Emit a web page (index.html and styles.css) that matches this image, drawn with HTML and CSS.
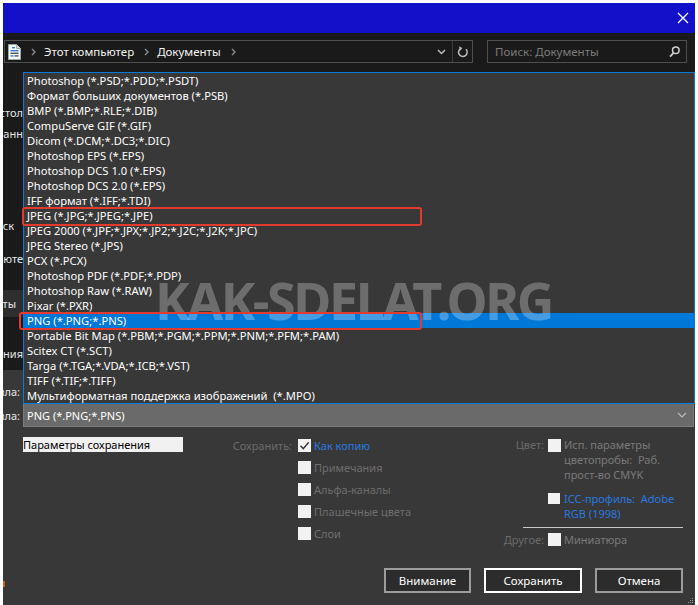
FILE: index.html
```html
<!DOCTYPE html>
<html lang="ru">
<head>
<meta charset="utf-8">
<link rel="stylesheet" href="styles.css">
</head>
<body>
<div class="window">
  <div class="titlebar">
    <svg class="close" width="12" height="12" viewBox="0 0 12 12"><path d="M1 1L11 11M11 1L1 11" stroke="#fff" stroke-width="1.3"/></svg>
  </div>
  <div class="toolbar">
    <div class="address">
      <svg class="docicon" width="13" height="16" viewBox="0 0 13 16"><path d="M0.5 0.5h8l4 4v11h-12z" fill="#f6f6f6" stroke="#9aa"/><path d="M8.5 0.5v4h4" fill="#dde" stroke="#9aa"/><rect x="4" y="3" width="3" height="1.4" fill="#2f7fe0"/><rect x="2.5" y="6" width="8" height="1.4" fill="#2f7fe0"/><rect x="2.5" y="8.6" width="8" height="1.4" fill="#555"/><rect x="2.5" y="11.2" width="3" height="1.4" fill="#2f7fe0"/><rect x="6.5" y="11.2" width="4" height="1.4" fill="#555"/></svg>
      <svg class="chev" width="5" height="8" viewBox="0 0 5 8"><path d="M1 1l3 3-3 3" stroke="#8a8a8a" stroke-width="1.4" fill="none"/></svg>
      <span class="crumb">Этот компьютер</span>
      <svg class="chev" width="5" height="8" viewBox="0 0 5 8"><path d="M1 1l3 3-3 3" stroke="#8a8a8a" stroke-width="1.4" fill="none"/></svg>
      <span class="crumb">Документы</span>
      <svg class="chev" width="5" height="8" viewBox="0 0 5 8"><path d="M1 1l3 3-3 3" stroke="#8a8a8a" stroke-width="1.4" fill="none"/></svg>
      <span class="spacer"></span>
      <svg class="drop" width="9" height="6" viewBox="0 0 9 6"><path d="M1 1l3.5 3.5L8 1" stroke="#bbb" stroke-width="1.5" fill="none"/></svg>
      <span class="divider"></span>
      <svg class="refresh" width="12" height="13" viewBox="0 0 12 13"><path d="M4.2 3.2A4.3 4.3 0 1 0 9 4.2" stroke="#bdbdbd" stroke-width="1.5" fill="none"/><path d="M2 1.2l3.2 1.9-2 2.6z" fill="#bdbdbd"/></svg>
    </div>
    <div class="search">
      <span class="placeholder">Поиск: Документы</span>
      <svg width="11" height="12" viewBox="0 0 11 12"><circle cx="6.8" cy="4.3" r="3.3" stroke="#d0d0d0" stroke-width="1.5" fill="none"/><path d="M4.6 6.8L1 10.6" stroke="#d0d0d0" stroke-width="1.8"/></svg>
    </div>
  </div>
  <div class="main">
    <nav class="nav">
      <div class="nav-item n1"><span>Рабочий стол</span></div>
      <div class="nav-item n2"><span>Мои банн</span></div>
      <div class="nav-item n3"><span>Диск</span></div>
      <div class="nav-item n4"><span>Компьюте</span></div>
      <div class="nav-item n5 active"><span>Документы</span></div>
      <div class="nav-item n6"><span>Сохранения</span></div>
    </nav>
    <div class="files"></div>
  </div>
  <div class="panel">
    <div class="row namerow">
      <div class="lbl"><span>Имя файла:</span></div>
      <div class="namefield"></div>
    </div>
    <div class="row typerow">
      <div class="lbl"><span>Тип файла:</span></div>
      <div class="combo">
        <span>PNG (*.PNG;*.PNS)</span>
        <svg width="10" height="6" viewBox="0 0 10 6"><path d="M1 1l4 4 4-4" stroke="#bcbcbc" stroke-width="1.2" fill="none"/></svg>
      </div>
    </div>
    <div class="options">
      <div class="opt-header">Параметры сохранения</div>
      <div class="save-group">
        <div class="opt-row"><span class="opt-label">Сохранить:</span><span class="cb checked"><svg width="13" height="13" viewBox="0 0 13 13"><path d="M2.5 6.8l2.8 2.8 5.4-6.4" stroke="#333" stroke-width="1.4" fill="none"/></svg></span><span class="opt-text blue">Как копию</span></div>
        <div class="opt-row"><span class="opt-label"></span><span class="cb"></span><span class="opt-text">Примечания</span></div>
        <div class="opt-row"><span class="opt-label"></span><span class="cb"></span><span class="opt-text">Альфа-каналы</span></div>
        <div class="opt-row"><span class="opt-label"></span><span class="cb"></span><span class="opt-text">Плашечные цвета</span></div>
        <div class="opt-row"><span class="opt-label"></span><span class="cb"></span><span class="opt-text">Слои</span></div>
      </div>
      <div class="color-group">
        <span class="c-label r1">Цвет:</span><span class="cb r1"></span><span class="c-text r1">Исп. параметры<br>цветопробы:&nbsp; Раб.<br>прост-во CMYK</span>
        <span class="cb r2 small"></span><span class="c-text r2 blue">ICC-профиль:&nbsp; Adobe<br>RGB (1998)</span>
        <span class="c-rule"></span>
        <span class="c-label r3">Другое:</span><span class="cb r3"></span><span class="c-text r3">Миниатюра</span>
      </div>
    </div>
    <div class="buttons">
      <button class="btn b1">Внимание</button>
      <button class="btn b2 default">Сохранить</button>
      <button class="btn b3">Отмена</button>
    </div>
  </div>

  <div class="dropdown">
    <div class="item">Photoshop (*.PSD;*.PDD;*.PSDT)</div>
    <div class="item">Формат больших документов (*.PSB)</div>
    <div class="item">BMP (*.BMP;*.RLE;*.DIB)</div>
    <div class="item">CompuServe GIF (*.GIF)</div>
    <div class="item">Dicom (*.DCM;*.DC3;*.DIC)</div>
    <div class="item">Photoshop EPS (*.EPS)</div>
    <div class="item">Photoshop DCS 1.0 (*.EPS)</div>
    <div class="item">Photoshop DCS 2.0 (*.EPS)</div>
    <div class="item">IFF формат (*.IFF;*.TDI)</div>
    <div class="item">JPEG (*.JPG;*.JPEG;*.JPE)</div>
    <div class="item">JPEG 2000 (*.JPF;*.JPX;*.JP2;*.J2C;*.J2K;*.JPC)</div>
    <div class="item">JPEG Stereo (*.JPS)</div>
    <div class="item">PCX (*.PCX)</div>
    <div class="item">Photoshop PDF (*.PDF;*.PDP)</div>
    <div class="item">Photoshop Raw (*.RAW)</div>
    <div class="item">Pixar (*.PXR)</div>
    <div class="item selected">PNG (*.PNG;*.PNS)</div>
    <div class="item">Portable Bit Map (*.PBM;*.PGM;*.PPM;*.PNM;*.PFM;*.PAM)</div>
    <div class="item">Scitex CT (*.SCT)</div>
    <div class="item">Targa (*.TGA;*.VDA;*.ICB;*.VST)</div>
    <div class="item">TIFF (*.TIF;*.TIFF)</div>
    <div class="item">Мультиформатная поддержка изображений&nbsp; (*.MPO)</div>
  </div>
  <div class="watermark">KAK-SDELAT.ORG</div>
  <div class="mark mark-jpeg"></div>
  <div class="mark mark-png"></div>
  <span class="tick"></span>
  <svg class="grip" width="6" height="6" viewBox="0 0 6 6"><rect x="4" y="0" width="1" height="1" fill="#999"/><rect x="2" y="2" width="1" height="1" fill="#999"/><rect x="4" y="2" width="1" height="1" fill="#999"/><rect x="0" y="4" width="1" height="1" fill="#999"/><rect x="2" y="4" width="1" height="1" fill="#999"/><rect x="4" y="4" width="1" height="1" fill="#999"/></svg>
</div>
</body>
</html>
```
FILE: styles.css
```css
* { box-sizing: border-box; }
html, body { margin: 0; padding: 0; }
body {
  background: #ffffff;
  width: 698px;
  height: 605px;
  overflow: hidden;
  font-family: "Noto Sans", "Open Sans", sans-serif;
  font-size: 11px;
}
.window {
  position: relative;
  margin: 3px 3px 0 3px;
  height: 602px;
  background: #1a1a1a;
  display: flex;
  flex-direction: column;
  overflow: hidden;
}
.titlebar {
  height: 30px;
  flex: none;
  background: #1310c9;
  display: flex;
  justify-content: flex-end;
  align-items: center;
  padding-right: 6px;
}
.close { display: block; }
.toolbar {
  height: 37px;
  flex: none;
  display: flex;
  padding: 7px 0 0 1px;
  gap: 14px;
}
.address {
  width: 469px;
  height: 23px;
  border: 1px solid #4f4f4f;
  display: flex;
  align-items: center;
  color: #f2f2f2;
  font-size: 11.5px;
}
.docicon { margin-left: 3px; }
.chev { margin-left: 10px; }
.crumb { margin-left: 8px; white-space: nowrap; }
.spacer { flex: 1; }
.drop { margin-right: 6px; }
.divider { width: 1px; height: 21px; background: #3c3c3c; }
.refresh { margin: 0 3px 0 4px; }
.search {
  width: 200px;
  height: 23px;
  border: 1px solid #4f4f4f;
  display: flex;
  align-items: center;
  justify-content: space-between;
  padding: 0 6px 0 7px;
  color: #7c7c7c;
  font-size: 11.5px;
}
.main {
  height: 300px;
  flex: none;
  display: flex;
}
.nav {
  width: 20px;
  overflow: hidden;
  color: #e6e6e6;
}
.nav-item {
  height: 20px;
  display: flex;
  align-items: center;
  justify-content: flex-end;
  white-space: nowrap;
}
.n1 { margin-top: 32px; }
.n2 { margin-top: 1px; }
.n3 { margin-top: 72px; padding-right: 9px; }
.n4 { margin-top: 13px; }
.n5 { margin-top: 22px; height: 27px; padding-right: 7px; }
.n6 { margin-top: 26px; }
.nav-item.active { background: #2e2e2e; }
.files { flex: 1; }
.panel {
  flex: 1;
  background: #383838;
  padding: 10px 1px 0 0;
  display: flex;
  flex-direction: column;
}
.row { display: flex; }
.lbl {
  width: 20px;
  overflow: hidden;
  display: flex;
  justify-content: flex-end;
  align-items: center;
  white-space: nowrap;
  color: #e8e8e8;
  padding-right: 3px;
}
.namerow { height: 22px; }
.namefield { flex: 1; background: #2a2a2a; }
.typerow { height: 24px; margin-top: 1px; }
.combo {
  flex: 1;
  background: #6a6a6a;
  border: 1px solid #7b7b7b;
  display: flex;
  align-items: center;
  justify-content: space-between;
  padding: 0 6px 0 3px;
  color: #ffffff;
}
.options {
  display: flex;
  margin-top: 7px;
  padding-left: 20px;
  margin-right: 11px;
}
.opt-header {
  width: 160px;
  height: 15px;
  margin-top: 3px;
  background: #f0f0f0;
  color: #000;
  line-height: 15px;
  white-space: nowrap;
  overflow: hidden;
}
.save-group { margin-left: 49px; }
.opt-row {
  height: 22px;
  display: flex;
  align-items: center;
}
.opt-label {
  width: 60px;
  margin-right: 6px;
  text-align: right;
  color: #6a6a6a;
  white-space: nowrap;
}
.cb {
  width: 13px;
  height: 13px;
  background: #f2f2f2;
  display: block;
  flex: none;
}
.cb svg { display: block; }
.opt-text {
  margin-left: 3px;
  color: #6e6e6e;
  white-space: nowrap;
}
.blue { color: #2a78e0 !important; }
.color-group {
  margin-left: auto;
  width: 182px;
  display: grid;
  grid-template-columns: 43px 13px 1fr;
  column-gap: 4px;
  align-content: start;
}
.c-label {
  text-align: right;
  color: #6a6a6a;
  line-height: 15px;
  white-space: nowrap;
}
.c-text {
  color: #7a7a7a;
  line-height: 15px;
  margin-left: -1px;
  white-space: nowrap;
}
.r1 { margin-top: 3px; }
.cb.r1 { margin-top: 5px; }
.r2 { margin-top: 9px; }
.cb.r2 { grid-column: 2; margin-top: 11px; }
.c-text.r2 { grid-column: 3; }
.cb.small { width: 12px; height: 11px; }
.c-rule {
  grid-column: 1 / -1;
  margin: 6px 0 0 22px;
  height: 1px;
  background: #c8c8c8;
}
.r3 { margin-top: 5px; }
.c-label.r3, .c-text.r3 { line-height: 13px; }
.buttons {
  display: flex;
  justify-content: flex-end;
  gap: 13px;
  margin-top: 22px;
  margin-right: 11px;
}
.btn {
  height: 25px;
  background: #2c2c2c;
  border: 2px solid #9c9c9c;
  color: #ffffff;
  font-family: "Noto Sans", "Open Sans", sans-serif;
  font-size: 11.5px;
  padding: 0;
}
.b1 { width: 87px; }
.b2 { width: 98px; }
.b3 { width: 88px; }
.btn.default { border-color: #ffffff; }
.dropdown {
  position: absolute;
  left: 20px;
  top: 69px;
  width: 672px;
  height: 332px;
  border: 1px solid #0a7ad8;
  background: #383838;
}
.item {
  height: 15px;
  line-height: 15px;
  padding-left: 3px;
  color: #ffffff;
  white-space: nowrap;
  font-size: 11.2px;
}
.item.selected { background: #0078d7; }
.watermark {
  position: absolute;
  left: 152px;
  top: 271px;
  font-family: "Noto Sans", sans-serif;
  font-weight: 700;
  font-size: 52px;
  line-height: 1;
  letter-spacing: -2.4px;
  color: rgba(255, 255, 255, 0.27);
  white-space: nowrap;
}
.mark {
  position: absolute;
  border: 2px solid #e23a2c;
  border-radius: 3px;
}
.mark-jpeg { left: 19px; top: 204px; width: 400px; height: 19px; }
.mark-png { left: 16px; top: 309px; width: 403px; height: 18px; }
.tick {
  position: absolute;
  left: 0;
  top: 578px;
  width: 2px;
  height: 6px;
  background: #d0641e;
}
.grip { position: absolute; right: 1px; bottom: 1px; }
```
